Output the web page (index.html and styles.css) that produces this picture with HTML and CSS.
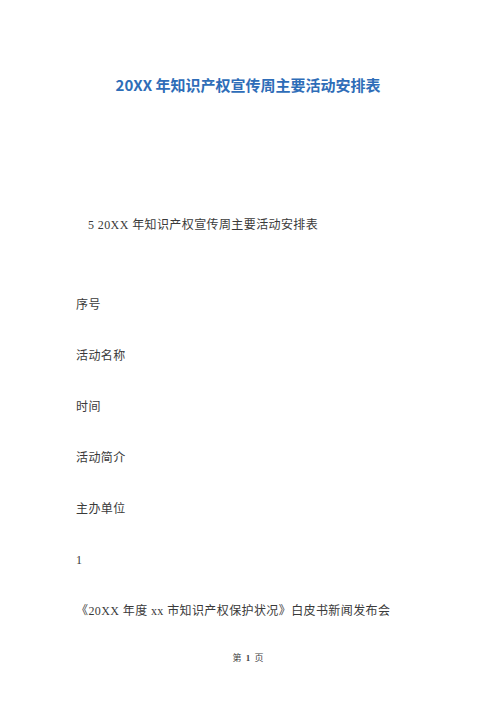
FILE: index.html
```html
<!DOCTYPE html>
<html lang="zh-CN">
<head>
<meta charset="utf-8">
<title>20XX年知识产权宣传周主要活动安排表</title>
<link rel="stylesheet" href="styles.css">
</head>
<body>
<div class="page">
  <h1 class="title">20XX 年知识产权宣传周主要活动安排表</h1>
  <div class="content">
    <p class="subtitle">5 20XX 年知识产权宣传周主要活动安排表</p>
    <p class="line">序号</p>
    <p class="line">活动名称</p>
    <p class="line">时间</p>
    <p class="line">活动简介</p>
    <p class="line">主办单位</p>
    <p class="line">1</p>
    <p class="line">《20XX 年度 xx 市知识产权保护状况》白皮书新闻发布会</p>
  </div>
  <div class="footer">第 <b>1</b> 页</div>
</div>
</body>
</html>
```
FILE: styles.css
```css
html, body {
  margin: 0;
  padding: 0;
  background: #ffffff;
}
.page {
  width: 496px;
  height: 702px;
  display: flex;
  flex-direction: column;
  overflow: hidden;
}
.title {
  margin: 76px 0 0 0;
  text-align: center;
  font-family: "Noto Sans CJK SC", "Noto Sans", sans-serif;
  font-weight: bold;
  font-size: 15px;
  line-height: 18px;
  color: #2e6db8;
}
.content {
  display: flex;
  flex-direction: column;
  padding-left: 76px;
  margin-top: 122px;
  gap: 33px;
}
.content p {
  margin: 0;
  font-family: "Liberation Serif", "Noto Sans CJK SC", serif;
  font-size: 12px;
  font-weight: normal;
  line-height: 18px;
  letter-spacing: 0.4px;
  color: #3a3a3a;
}
.content .subtitle {
  padding-left: 12px;
  margin-bottom: 29px;
}
.footer {
  margin-top: 32px;
  text-align: center;
  font-family: "Liberation Serif", "Noto Sans CJK SC", serif;
  font-size: 9px;
  line-height: 12px;
  color: #444444;
  word-spacing: 2px;
}
.footer b {
  font-weight: bold;
}
```
